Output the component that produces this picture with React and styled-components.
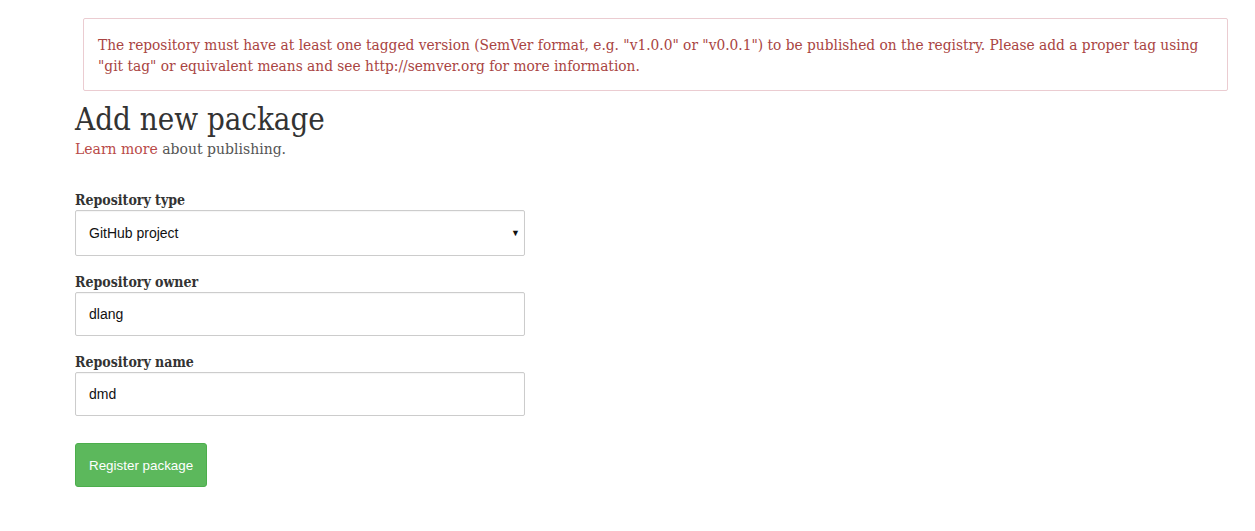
import React from "react";
import styled, { createGlobalStyle } from "styled-components";

const GlobalStyle = createGlobalStyle`
  body {
    margin: 0;
    background: #fff;
    font-family: "DejaVu Serif", serif;
    color: #333;
  }
`;

const Page = styled.div`
  width: 1255px;
  height: 531px;
  padding: 18px 0 0 75px;
  box-sizing: border-box;
`;

const Alert = styled.div`
  margin-left: 8px;
  width: 1145px;
  box-sizing: border-box;
  border: 1px solid #ebccd1;
  border-radius: 2px;
  padding: 16px 14px 13px 14px;
  color: #a94442;
  font-family: "DejaVu Serif Condensed", "DejaVu Serif", serif;
  font-size: 15.3px;
  line-height: 21px;
`;

const Title = styled.h1`
  margin: 10px 0 0 0;
  font-family: "DejaVu Serif Condensed", "DejaVu Serif", serif;
  font-size: 31px;
  font-weight: 400;
  line-height: 36px;
  color: #333;
`;

const Sub = styled.p`
  margin: 2px 0 0 0;
  font-size: 14px;
  line-height: 20px;
  color: #555;
`;

const Link = styled.a`
  color: #b94a48;
  text-decoration: none;
`;

const Form = styled.form`
  margin-top: 31px;
  display: flex;
  flex-direction: column;
  width: 450px;
`;

const Group = styled.div`
  display: flex;
  flex-direction: column;
  margin-bottom: ${({ last }) => (last ? "27px" : "16px")};
`;

const Label = styled.label`
  font-family: "DejaVu Serif Condensed", "DejaVu Serif", serif;
  font-weight: 700;
  font-size: 14px;
  line-height: 20px;
  color: #333;
`;

const Field = styled.div`
  height: ${({ tall }) => (tall ? "46px" : "44px")};
  border: 1px solid #ccc;
  border-radius: 2px;
  box-sizing: border-box;
  display: flex;
  align-items: center;
  padding: 0 13px;
  font-family: "Liberation Sans", Arial, sans-serif;
  font-size: 14px;
  color: #111;
  box-shadow: inset 0 1px 1px rgba(0, 0, 0, 0.04);
`;

const Caret = styled.span`
  margin-left: auto;
  margin-right: -9px;
  font-size: 9px;
  color: #111;
`;

const Button = styled.button`
  align-self: flex-start;
  height: 44px;
  padding: 0 13px;
  background: #5cb85c;
  border: 1px solid #4cae4c;
  border-radius: 3px;
  color: #fff;
  font-family: "Liberation Sans", Arial, sans-serif;
  font-size: 13.4px;
`;

export default function App() {
  return (
    <>
      <GlobalStyle />
      <Page>
        <Alert>
          The repository must have at least one tagged version (SemVer format,
          e.g. "v1.0.0" or "v0.0.1") to be published on the registry. Please add
          a proper tag using "git tag" or equivalent means and see
          http://semver.org for more information.
        </Alert>
        <Title>Add new package</Title>
        <Sub>
          <Link href="#">Learn more</Link> about publishing.
        </Sub>
        <Form>
          <Group>
            <Label>Repository type</Label>
            <Field tall>
              GitHub project
              <Caret>▼</Caret>
            </Field>
          </Group>
          <Group>
            <Label>Repository owner</Label>
            <Field>dlang</Field>
          </Group>
          <Group last>
            <Label>Repository name</Label>
            <Field>dmd</Field>
          </Group>
          <Button type="button">Register package</Button>
        </Form>
      </Page>
    </>
  );
}
